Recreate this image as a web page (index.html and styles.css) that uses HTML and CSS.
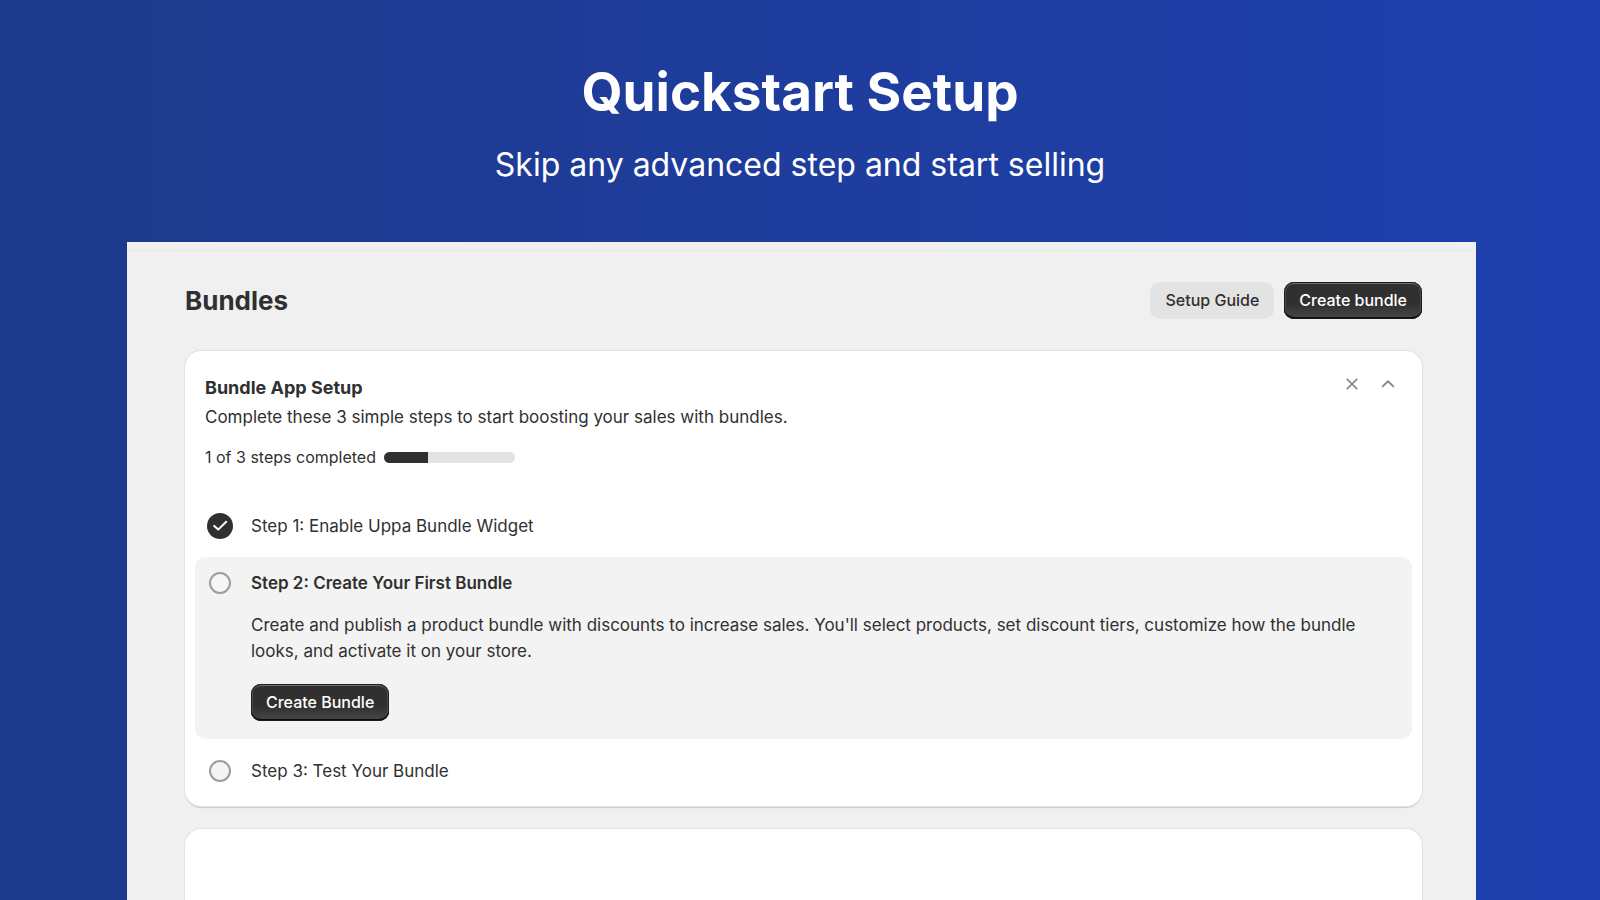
FILE: index.html
```html
<!DOCTYPE html>
<html lang="en">
<head>
<meta charset="utf-8">
<meta name="viewport" content="width=device-width, initial-scale=1">
<title>Quickstart Setup</title>
<link rel="stylesheet" href="styles.css">
</head>
<body>
<header class="hero">
  <h1 class="hero-title">Quickstart Setup</h1>
  <p class="hero-subtitle">Skip any advanced step and start selling</p>
</header>
<main class="panel">
  <div class="panel-edge"></div>
  <div class="page-head">
    <h2 class="page-title">Bundles</h2>
    <div class="actions">
      <button class="btn btn-secondary" type="button">Setup Guide</button>
      <button class="btn btn-primary" type="button">Create bundle</button>
    </div>
  </div>
  <section class="card setup">
    <div class="setup-head">
      <div class="setup-intro">
        <h3 class="setup-title">Bundle App Setup</h3>
        <p class="setup-text">Complete these 3 simple steps to start boosting your sales with bundles.</p>
      </div>
      <div class="icon-actions">
        <button class="icon-btn" type="button" aria-label="Dismiss">
          <svg width="16" height="16" viewBox="0 0 16 16" fill="none" stroke="#8a8a8a" stroke-width="1.8" stroke-linecap="round"><path d="M3.3 3.3 12.7 12.7M12.7 3.3 3.3 12.7"/></svg>
        </button>
        <button class="icon-btn" type="button" aria-label="Collapse">
          <svg width="16" height="16" viewBox="0 0 16 16" fill="none" stroke="#8a8a8a" stroke-width="2" stroke-linecap="round" stroke-linejoin="round"><path d="M2.7 10.4 8 5.2 13.3 10.4"/></svg>
        </button>
      </div>
    </div>
    <div class="progress-row">
      <span class="progress-label" id="progress-label">1 of 3 steps completed</span>
      <div class="progress" role="progressbar" aria-labelledby="progress-label" aria-valuemin="0" aria-valuemax="3" aria-valuenow="1"><div class="progress-fill"></div></div>
    </div>
    <ol class="steps">
      <li class="step">
        <svg class="step-icon" width="28" height="28" viewBox="0 0 28 28" fill="none"><circle cx="14" cy="14" r="13" fill="#303030"/><path d="M8.2 13.9 12.2 17.6 20.2 9.8" stroke="#fff" stroke-width="2" stroke-linecap="round" stroke-linejoin="round"/></svg>
        <div class="step-body"><h4 class="step-title">Step 1: Enable Uppa Bundle Widget</h4></div>
      </li>
      <li class="step step-active">
        <svg class="step-icon" width="28" height="28" viewBox="0 0 28 28"><circle cx="14" cy="14" r="10" fill="#f6f6f7" stroke="#999ea4" stroke-width="2"/></svg>
        <div class="step-body">
          <h4 class="step-title">Step 2: Create Your First Bundle</h4>
          <p class="step-text">Create and publish a product bundle with discounts to increase sales. You'll select products, set discount tiers, customize how the bundle looks, and activate it on your store.</p>
          <button class="btn btn-primary" type="button">Create Bundle</button>
        </div>
      </li>
      <li class="step">
        <svg class="step-icon" width="28" height="28" viewBox="0 0 28 28"><circle cx="14" cy="14" r="10" fill="#f4f4f5" stroke="#999ea4" stroke-width="2"/></svg>
        <div class="step-body"><h4 class="step-title">Step 3: Test Your Bundle</h4></div>
      </li>
    </ol>
  </section>
  <section class="card card-next"></section>
</main>
</body>
</html>
```
FILE: styles.css
```css
* { box-sizing: border-box; }
h1, h2, h3, h4, p, ol { margin: 0; padding: 0; }
body {
  margin: 0;
  min-height: 100vh;
  display: flex;
  flex-direction: column;
  font-family: Inter, "Liberation Sans", sans-serif;
  color: #303030;
  background: linear-gradient(to right, #1e3a8a, #1e40af);
}
.hero {
  padding: 60px 24px 55px;
  text-align: center;
  color: #fff;
}
.hero-title { font-size: 53px; line-height: 64px; font-weight: 700; }
.hero-subtitle { margin-top: 19px; font-size: 32px; line-height: 44px; font-weight: 390; }
.panel {
  flex: 1;
  margin: 0 124px 0 127px;
  padding: 0 54px 0 58px;
  display: flex;
  flex-direction: column;
  background: #f0f0f0;
}
.panel-edge {
  flex: none;
  height: 9px;
  margin: 0 -54px 0 -58px;
  border-bottom: 1px solid #e8e8e8;
}
.page-head {
  display: flex;
  align-items: center;
  justify-content: space-between;
  padding: 31px 0 32px;
}
.page-title { font-size: 26px; line-height: 36px; font-weight: 650; }
.actions { display: flex; gap: 10px; }
.btn {
  height: 37px;
  padding: 0 15px 1px;
  border: 0;
  border-radius: 10px;
  font-family: inherit;
  font-size: 16px;
  line-height: 20px;
  font-weight: 550;
}
.btn-secondary { background: #e3e3e3; color: #303030; }
.btn-primary {
  color: #fff;
  background: linear-gradient(#303030 60%, #484848);
  box-shadow: inset 0 0 0 1px #1c1c1c, inset 0 -2px 0 #0c0c0c, inset 0 2px 0 #707070, inset 2px 0 0 #4c4c4c, inset -2px 0 0 #4c4c4c;
}
.card {
  flex: none;
  border-radius: 16px;
  background: #fff;
  box-shadow: 0 0 0 1px #e2e2e2, 0 2px 1px #cacaca;
}
.setup { padding: 20px 10px 9px; }
.setup-head { display: flex; justify-content: space-between; padding: 4px 8px 0 10px; }
.setup-title { font-size: 18px; line-height: 26px; font-weight: 650; }
.setup-text { margin-top: 3px; font-size: 17px; line-height: 26px; }
.icon-actions { display: flex; gap: 4px; height: 32px; margin-top: -7px; }
.icon-btn {
  width: 32px;
  height: 32px;
  padding: 0;
  display: flex;
  align-items: center;
  justify-content: center;
  border: 0;
  background: none;
}
.progress-row { display: flex; align-items: center; gap: 8px; padding: 14px 10px 0; }
.progress-label { font-size: 16px; line-height: 26px; }
.progress { width: 131px; height: 11px; border-radius: 6px; overflow: hidden; background: #e3e3e3; }
.progress-fill { width: 33.33%; height: 100%; background: #303030; }
.steps { margin-top: 30px; list-style: none; }
.step { display: flex; gap: 17px; padding: 12px 11px; border-radius: 10px; }
.step-icon { flex: none; }
.step-body { flex: 1; }
.step-title { font-size: 17px; line-height: 28px; font-weight: 400; }
.step-active { margin-top: 5px; margin-bottom: 6px; padding-bottom: 18px; background: #f3f3f3; }
.step-active .step-title { font-weight: 600; }
.step-text { margin: 15px 0 20px; font-size: 17px; line-height: 26px; }
.card-next { flex: 1; margin-top: 23px; border-radius: 16px 16px 0 0; }
```
